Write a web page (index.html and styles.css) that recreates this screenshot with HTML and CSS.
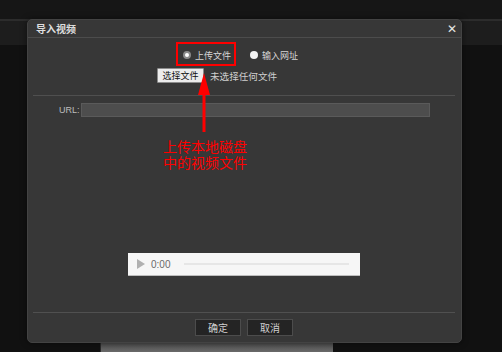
FILE: index.html
```html
<!DOCTYPE html>
<html lang="zh-CN">
<head>
    <meta charset="UTF-8">
    <meta name="viewport" content="width=device-width, initial-scale=1.0">
    <title>导入视频</title>
    <link rel="stylesheet" href="styles.css">
</head>
<body>

<div class="page">
    <div class="dialog">
        <div class="dialog-head">
            <span class="dialog-title">导入视频</span>
            <span class="dialog-close">✕</span>
        </div>

        <div class="source">
            <div class="radio-row">
                <label class="radio"><span class="dot checked"></span>上传文件</label>
                <label class="radio"><span class="dot"></span>输入网址</label>
            </div>
            <div class="file-row">
                <button class="file-btn">选择文件</button>
                <span class="file-name">未选择任何文件</span>
            </div>
        </div>

        <div class="body">
            <div class="url-row">
                <span class="url-label">URL:</span>
                <input type="text" class="url-input">
            </div>
            <div class="player">
                <span class="play"></span>
                <span class="time">0:00</span>
                <span class="track"></span>
            </div>
        </div>

        <div class="dialog-foot">
            <button class="btn">确定</button>
            <button class="btn">取消</button>
        </div>

        <!-- annotation -->
        <div class="mark-box"></div>
        <svg class="mark-arrow" width="16" height="62" viewBox="0 0 16 62">
            <polygon points="8,0 14,22 2,22" fill="#f00"/>
            <rect x="6.5" y="20" width="3" height="39" fill="#f00"/>
        </svg>
        <div class="mark-text">上传本地磁盘<br>中的视频文件</div>
    </div>
    <div class="under"></div>
</div>

</body>
</html>
```

FILE: styles.css
```css
body {
    margin: 0;
    height: 352px;
    overflow: hidden;
    font-family: "Liberation Sans", "Noto Sans CJK SC", sans-serif;
    background: linear-gradient(to bottom,
        #161616 0, #161616 19px,
        #2c2c2c 19px, #2c2c2c 21px,
        #1d1d1d 21px, #1d1d1d 45px,
        #111 45px);
}

.page {
    padding: 19px 0 0 27px;
}

.dialog {
    position: relative;
    box-sizing: border-box;
    width: 435px;
    height: 324px;
    background: #373737;
    border: 1px solid #434343;
    border-radius: 5px;
    display: flex;
    flex-direction: column;
    box-shadow: 0 0 6px rgba(0, 0, 0, 0.5);
}

.dialog-head {
    height: 17px;
    border-bottom: 1px solid #4c4c4c;
    display: flex;
    align-items: center;
    justify-content: space-between;
    padding: 0 4px 0 8px;
}

.dialog-title {
    color: #dedede;
    font-size: 10px;
    font-weight: bold;
    font-family: "Noto Sans CJK SC", sans-serif;
}

.dialog-close {
    color: #e6e6e6;
    font-size: 12px;
    line-height: 12px;
    font-weight: bold;
    font-family: "DejaVu Sans", sans-serif;
}

.source {
    padding: 10px 0 12px;
}

.radio-row {
    display: flex;
    align-items: center;
    height: 14px;
    padding-left: 155px;
    gap: 19px;
}

.radio {
    display: flex;
    align-items: center;
    gap: 4px;
    color: #d6d6d6;
    font-size: 9px;
    font-family: "Noto Sans CJK SC", sans-serif;
}

.dot {
    width: 8px;
    height: 8px;
    border-radius: 50%;
    background: #f2f2f2;
    box-sizing: border-box;
}

.dot.checked {
    background: #fff;
    border: 2px solid #8a8a8a;
}

.file-row {
    display: flex;
    align-items: center;
    margin-top: 6px;
    height: 15px;
    padding-left: 129px;
    gap: 6px;
}

.file-btn {
    height: 15px;
    width: 47px;
    padding: 0;
    background: #ececec;
    border: 1px solid #8c8c8c;
    border-radius: 1px;
    color: #111;
    font-size: 9px;
    font-family: "Noto Sans CJK SC", sans-serif;
}

.file-name {
    color: #cfcfcf;
    font-size: 9.6px;
    font-family: "Noto Sans CJK SC", sans-serif;
}

.body {
    flex: 1;
    margin: 0 6px 0 5px;
    border-top: 1px solid #4f4f4f;
}

.url-row {
    display: flex;
    align-items: center;
    margin-top: 7px;
    padding-left: 26px;
    gap: 1px;
}

.url-label {
    color: #bdbdbd;
    font-size: 9px;
}

.url-input {
    box-sizing: border-box;
    width: 349px;
    height: 14px;
    margin: 0;
    padding: 0;
    background: #4d4d4d;
    border: 1px solid #5a5a5a;
}

.player {
    box-sizing: border-box;
    width: 232px;
    height: 23px;
    margin: 136px auto 0;
    background: #f6f6f6;
    border-bottom: 1px solid #bdbdbd;
    display: flex;
    align-items: center;
    padding-left: 9px;
}

.play {
    width: 0;
    height: 0;
    border-left: 8px solid #b0b0b0;
    border-top: 5px solid transparent;
    border-bottom: 5px solid transparent;
}

.time {
    margin-left: 6px;
    color: #6a6a6a;
    font-size: 10px;
}

.track {
    margin-left: 14px;
    width: 165px;
    height: 2px;
    background: #e6e6e6;
}

.dialog-foot {
    margin: 0 6px 0 5px;
    border-top: 1px solid #505050;
    height: 29px;
    display: flex;
    justify-content: center;
    align-items: center;
    gap: 6px;
}

.btn {
    width: 46px;
    height: 17px;
    padding: 0;
    background: #242424;
    border: 1px solid #4c4c4c;
    color: #cfcfcf;
    font-size: 10px;
    font-family: "Noto Sans CJK SC", sans-serif;
}

.mark-box {
    position: absolute;
    left: 148px;
    top: 22px;
    width: 56px;
    height: 20px;
    border: 2px solid #f00;
}

.mark-arrow {
    position: absolute;
    left: 168px;
    top: 53px;
}

.mark-text {
    position: absolute;
    left: 135px;
    top: 118px;
    color: #f00;
    font-size: 14px;
    line-height: 16px;
    font-family: "Noto Sans CJK SC", sans-serif;
}

.under {
    margin-left: 73px;
    width: 232px;
    height: 9px;
    background: linear-gradient(#4c4c4c, #6a6a6a);
    border-left: 1px solid #2a2a2a;
}
```
